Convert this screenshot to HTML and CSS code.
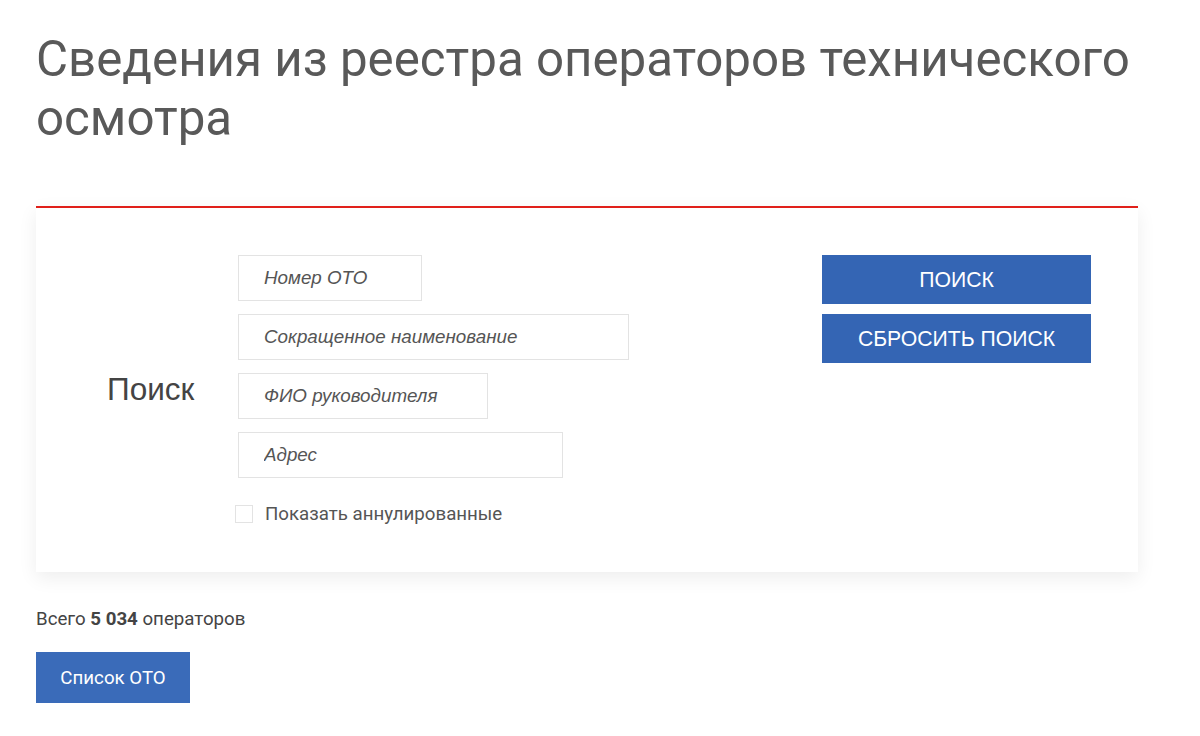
FILE: index.html
```html
<!DOCTYPE html>
<html lang="ru">
<head>
<meta charset="utf-8">
<title>Сведения из реестра операторов технического осмотра</title>
<link rel="stylesheet" href="styles.css">
</head>
<body>
<div class="page">
  <h1 class="title">Сведения из реестра операторов технического осмотра</h1>
  <form class="card">
    <div class="label">Поиск</div>
    <div class="fields">
      <input class="field w1" type="text" placeholder="Номер ОТО">
      <input class="field w2" type="text" placeholder="Сокращенное наименование">
      <input class="field w3" type="text" placeholder="ФИО руководителя">
      <input class="field w4" type="text" placeholder="Адрес">
      <label class="check"><span class="box"></span><span>Показать аннулированные</span></label>
    </div>
    <div class="actions">
      <button type="button" class="btn">ПОИСК</button>
      <button type="button" class="btn">СБРОСИТЬ ПОИСК</button>
    </div>
  </form>
  <p class="total">Всего <b>5 034</b> операторов</p>
  <button type="button" class="list-btn">Список ОТО</button>
</div>
</body>
</html>
```
FILE: styles.css
```css
* { box-sizing: border-box; }
html, body { margin: 0; background: #fff; }
body { font-family: Roboto, "Liberation Sans", Arial, sans-serif; color: #555; }
.page { padding: 30px 0 0 36px; width: 1138px; }
.title {
  margin: 0;
  font-weight: 400;
  font-size: 49.25px;
  line-height: 59px;
  color: #595959;
  width: 1100px;
}
.card {
  margin-top: 58px;
  border-top: 2px solid #e0201a;
  background: #fff;
  box-shadow: 0 6px 18px rgba(0,0,0,0.07);
  display: flex;
  align-items: center;
  padding: 47px 0 48px 0;
}
.label {
  width: 202px;
  padding-left: 71px;
  font-size: 31.5px;
  color: #444;
  font-family: "Liberation Sans", Arial, sans-serif;
  align-self: center;
}
.fields {
  width: 584px;
  display: flex;
  flex-direction: column;
  align-items: flex-start;
  gap: 13px;
}
.field {
  height: 46px;
  border: 1px solid #e3e3e3;
  background: #fff;
  padding: 0 0 0 25px;
  font: italic 18.8px "Liberation Sans", Arial, sans-serif;
  color: #555;
  outline: none;
}
.field::placeholder { color: #555; opacity: 1; }
.w1 { width: 184px; }
.w2 { width: 391px; }
.w3 { width: 250px; }
.w4 { width: 325px; }
.check {
  display: flex;
  align-items: center;
  gap: 12px;
  height: 20px;
  margin: 13px 0 0 -3px;
  font-size: 18.7px;
  line-height: 20px;
  color: #555;
}
.box {
  width: 18px;
  height: 18px;
  border: 1px solid #e3e3e3;
  background: #fff;
}
.actions {
  align-self: flex-start;
  width: 269px;
  display: flex;
  flex-direction: column;
  gap: 10px;
}
.btn {
  height: 49px;
  border: none;
  background: #3465b4;
  color: #fff;
  font: 21.2px "Liberation Sans", Arial, sans-serif;
  cursor: pointer;
}
.total {
  margin: 36px 0 0 0;
  font-size: 18.7px;
  line-height: 22px;
  color: #444;
}
.total b { font-weight: 700; }
.list-btn {
  margin-top: 22px;
  width: 154px;
  height: 51px;
  border: none;
  background: #3a6bb9;
  color: #fff;
  font: 400 18.7px Roboto, sans-serif;
}
```
